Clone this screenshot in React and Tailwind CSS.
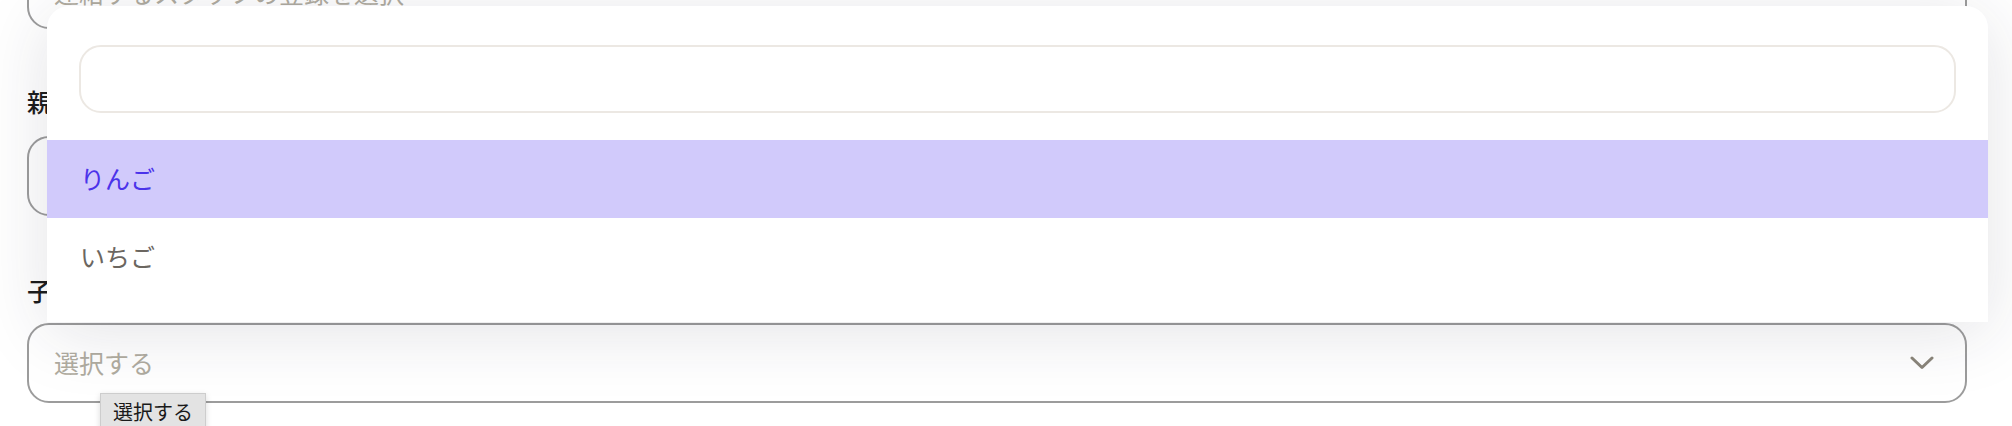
const font = "font-['Noto_Sans_CJK_JP','Noto_Sans',sans-serif]";

const Field = ({ children, className = "" }) => (
  <div
    className={`flex h-[80px] items-center justify-between rounded-[22px] border-2 border-[#9c9c9c] bg-white pl-[25px] pr-[31px] ${className}`}
  >
    {children}
  </div>
);

const Chevron = () => (
  <svg width="24" height="14" viewBox="0 0 24 14" fill="none">
    <polyline
      points="2,2 12,11.5 22,2"
      stroke="#8a857a"
      strokeWidth="3"
      strokeLinecap="round"
      strokeLinejoin="round"
    />
  </svg>
);

const App = () => {
  const options = [
    { label: "りんご", active: true },
    { label: "いちご", active: false },
  ];

  return (
    <div className={`relative h-[426px] w-[2012px] overflow-hidden bg-white ${font}`}>
      <div className="-mt-[51px] pl-[27px] pr-[45px]">
        <Field className="h-[78px]">
          <span className="translate-y-[4px] text-[25px] text-[#b0aca0]">連絡するスタッフの登録を選択</span>
        </Field>

        <label className="mt-[54px] mb-[17px] block text-[25px] leading-[36px] font-medium text-[#1c1c1c]">
          親カテゴリ
        </label>
        <Field>
          <span className="text-[25px] text-[#b0aca0]">選択する</span>
        </Field>

        <label className="mt-[56px] mb-[15px] block text-[25px] leading-[36px] font-medium text-[#1c1c1c]">
          子カテゴリ
        </label>
        <Field>
          <span className="text-[25px] text-[#b0aca0]">選択する</span>
          <Chevron />
        </Field>
      </div>

      {/* dropdown menu */}
      <div className="absolute left-[47px] top-[6px] flex h-[316px] w-[1941px] flex-col rounded-t-[22px] bg-white shadow-[0_10px_70px_rgba(40,40,60,0.13)]">
        <div className="px-[32px] pt-[39px] pb-[27px]">
          <input
            type="text"
            className="h-[68px] w-full rounded-[22px] border-2 border-[#ece8e3] bg-white px-[20px] text-[25px] outline-none"
          />
        </div>
        {options.map((o) => (
          <div
            key={o.label}
            className={`flex h-[78px] items-center px-[33px] text-[25px] ${
              o.active ? "bg-[#d1cafb] text-[#4b33ea]" : "text-[#6b6660]"
            }`}
          >
            {o.label}
          </div>
        ))}
      </div>

      {/* native title tooltip */}
      <div className="absolute left-[100px] top-[393px] border border-[#cdcdcd] bg-[#e3e3e3] px-[12px] pt-[5px] pb-[6px] text-[20px] leading-[26px] text-[#1a1a1a] shadow-[0_2px_6px_rgba(0,0,0,0.15)]">
        選択する
      </div>
    </div>
  );
};

export default App;
